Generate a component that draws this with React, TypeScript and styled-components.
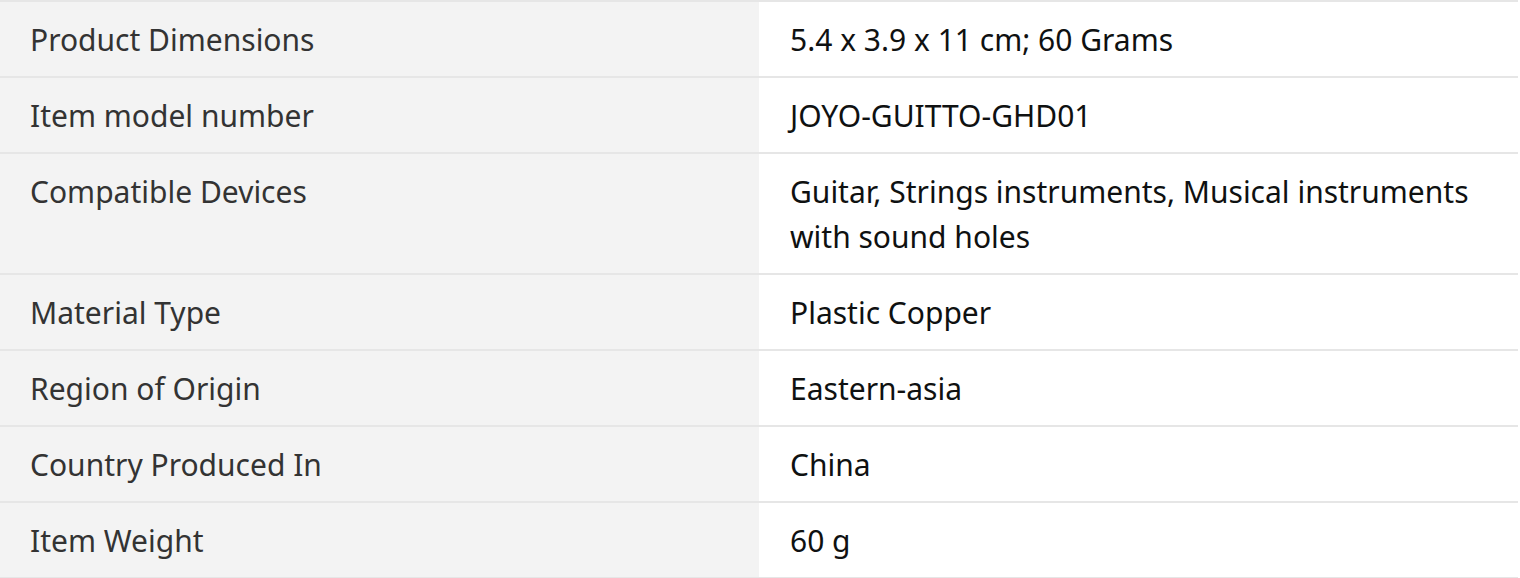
import React from "react";
import styled, { createGlobalStyle } from "styled-components";

const Global = createGlobalStyle`
  html, body { margin: 0; padding: 0; background: #ffffff; }
  body { font-family: "Noto Sans", "Open Sans", Arial, sans-serif; }
`;

const Table = styled.div`
  width: 1518px;
  border-bottom: 2px solid #e6e6e6;
`;

const Row = styled.div`
  display: grid;
  grid-template-columns: 759px 1fr;
  border-top: 2px solid #e6e6e6;
`;

const Label = styled.div`
  background: #f3f3f3;
  color: #333333;
  font-size: 30px;
  line-height: 45px;
  padding: 15px 30px 14px 30px;
`;

const Value = styled.div`
  background: #ffffff;
  color: #0f1111;
  font-size: 30px;
  line-height: 45px;
  padding: 15px 30px 14px 31px;
`;

const rows: [string, string][] = [
  ["Product Dimensions", "5.4 x 3.9 x 11 cm; 60 Grams"],
  ["Item model number", "JOYO-GUITTO-GHD01"],
  ["Compatible Devices", "Guitar, Strings instruments, Musical instruments with sound holes"],
  ["Material Type", "Plastic Copper"],
  ["Region of Origin", "Eastern-asia"],
  ["Country Produced In", "China"],
  ["Item Weight", "60 g"],
];

export default function App() {
  return (
    <>
      <Global />
      <Table>
        {rows.map(([k, v]) => (
          <Row key={k}>
            <Label>{k}</Label>
            <Value>{v}</Value>
          </Row>
        ))}
      </Table>
    </>
  );
}
